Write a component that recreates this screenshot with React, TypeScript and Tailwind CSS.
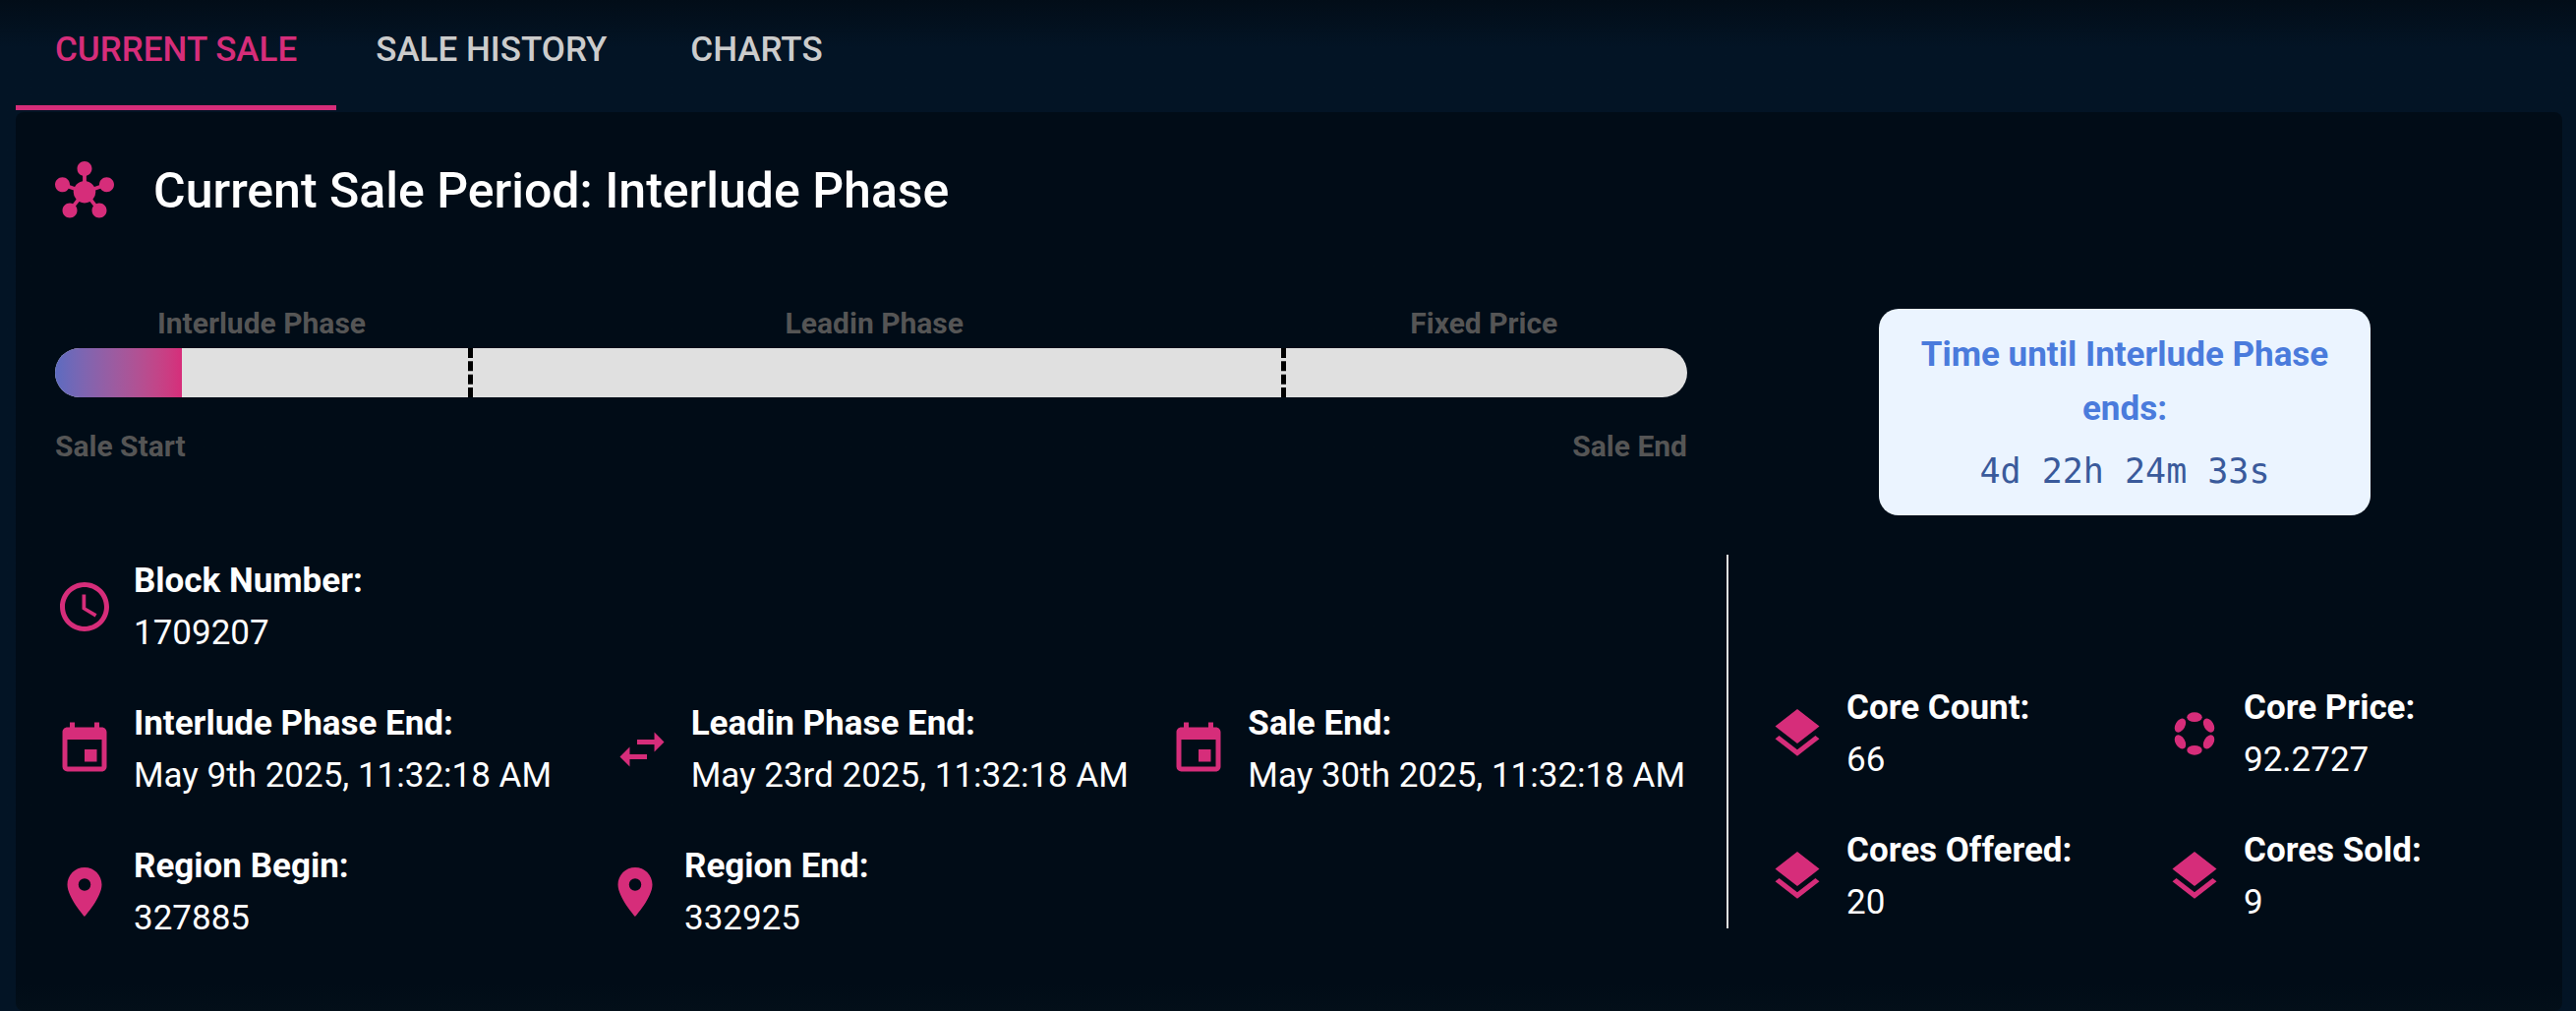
import clsx from 'clsx'
import type { ReactNode } from 'react'
import { MdAccessTime, MdEvent, MdHub, MdLayers, MdLocationOn, MdSwapHoriz } from 'react-icons/md'

const tabs = ['Current Sale', 'Sale History', 'Charts']

// width of each phase, in percent of the whole sale
const phases = [
  { name: 'Interlude Phase', share: 25.3 },
  { name: 'Leadin Phase', share: 49.8 },
  { name: 'Fixed Price', share: 24.9 },
]

const progress = 7.8

const PolkadotIcon = () => (
  <svg viewBox="0 0 60 60" className="size-15" fill="currentColor">
    {[0, 60, 120, 180, 240, 300].map((angle) => (
      <ellipse key={angle} cx="30" cy="13.2" rx="7.7" ry="4.9" transform={`rotate(${angle} 30 30)`} />
    ))}
  </svg>
)

type InfoProps = {
  icon: ReactNode
  label: string
  value: string
}

const Info = ({ icon, label, value }: InfoProps) => (
  <div className="flex items-center gap-5">
    <span className="shrink-0 text-[#d62d7a]">{icon}</span>
    <dl className="whitespace-nowrap text-[35px] leading-[53px]">
      <dt className="font-bold">{label}</dt>
      <dd>{value}</dd>
    </dl>
  </div>
)

const App = () => {
  return (
    <div className="flex min-h-screen flex-col bg-[#031425] bg-linear-to-b from-[#020d18] to-[#031425] to-[48px] pr-3.5 pl-4 font-[Roboto,sans-serif] text-white">
      <nav role="tablist" className="flex h-28">
        {tabs.map((tab, i) => (
          <button
            key={tab}
            role="tab"
            aria-selected={i === 0}
            className={clsx(
              'min-w-56 border-b-[5px] px-10 pb-1 text-[35px] font-medium uppercase',
              i === 0 ? 'border-[#d62d7a] text-[#d62d7a]' : 'border-transparent text-[#cccccc]',
            )}
          >
            {tab}
          </button>
        ))}
      </nav>

      <main className="mt-0.5 flex-1 rounded-lg bg-linear-to-b from-[#010c17] from-97% to-[#030f19] p-10">
        <header className="flex items-center gap-10">
          <MdHub className="size-15 text-[#d62d7a]" />
          <h1 className="text-[50px] leading-[80px] font-medium">Current Sale Period: Interlude Phase</h1>
        </header>

        <section className="mt-20 grid grid-cols-3 gap-10">
          <div className="col-span-2 text-[30px] leading-[30px] font-bold text-[#555555]">
            <div className="flex text-center">
              {phases.map((phase) => (
                <span key={phase.name} style={{ width: `${phase.share}%` }}>{phase.name}</span>
              ))}
            </div>
            <div className="relative mt-2.5 flex h-[50px] overflow-hidden rounded-full bg-[#e0e0e0]">
              <div
                className="absolute inset-y-0 left-0 bg-linear-to-r from-[#5c6bc0] to-[#d62d7a]"
                style={{ width: `${progress}%` }}
              />
              {phases.map((phase, i) => (
                <div
                  key={phase.name}
                  className={clsx(i > 0 && 'border-l-[5px] border-dashed border-black')}
                  style={{ width: `${phase.share}%` }}
                />
              ))}
            </div>
            <div className="mt-[35px] flex justify-between">
              <span>Sale Start</span>
              <span>Sale End</span>
            </div>
          </div>

          <div className="w-[500px] justify-self-center rounded-[20px] bg-[#ebf4ff] px-10 pt-[19px] pb-[17px] text-center text-[35px] leading-[55px]">
            <h2 className="font-bold text-[#4a7bdc]">Time until Interlude Phase ends:</h2>
            <p className="mt-[9px] font-['DejaVu_Sans_Mono',monospace] text-[#3a5a9b]">4d 22h 24m 33s</p>
          </div>
        </section>

        <section className="mt-10 grid grid-cols-3 gap-10">
          <div className="col-span-2 flex flex-col gap-[39px]">
            <Info icon={<MdAccessTime className="size-15" />} label="Block Number:" value="1709207" />
            <div className="grid grid-cols-3 gap-x-10">
              <Info icon={<MdEvent className="size-15" />} label="Interlude Phase End:" value="May 9th 2025, 11:32:18 AM" />
              <Info icon={<MdSwapHoriz className="size-15" />} label="Leadin Phase End:" value="May 23rd 2025, 11:32:18 AM" />
              <Info icon={<MdEvent className="size-15" />} label="Sale End:" value="May 30th 2025, 11:32:18 AM" />
            </div>
            <div className="grid grid-cols-3 gap-x-5">
              <Info icon={<MdLocationOn className="size-15" />} label="Region Begin:" value="327885" />
              <Info icon={<MdLocationOn className="size-15" />} label="Region End:" value="332925" />
            </div>
          </div>

          <div className="grid min-h-[380px] grid-cols-2 content-end gap-x-10 gap-y-[39px] self-start border-l-2 border-[#e0e0e0] pl-10">
            <Info icon={<MdLayers className="size-15" />} label="Core Count:" value="66" />
            <Info icon={<PolkadotIcon />} label="Core Price:" value="92.2727" />
            <Info icon={<MdLayers className="size-15" />} label="Cores Offered:" value="20" />
            <Info icon={<MdLayers className="size-15" />} label="Cores Sold:" value="9" />
          </div>
        </section>
      </main>
    </div>
  )
}

export default App
